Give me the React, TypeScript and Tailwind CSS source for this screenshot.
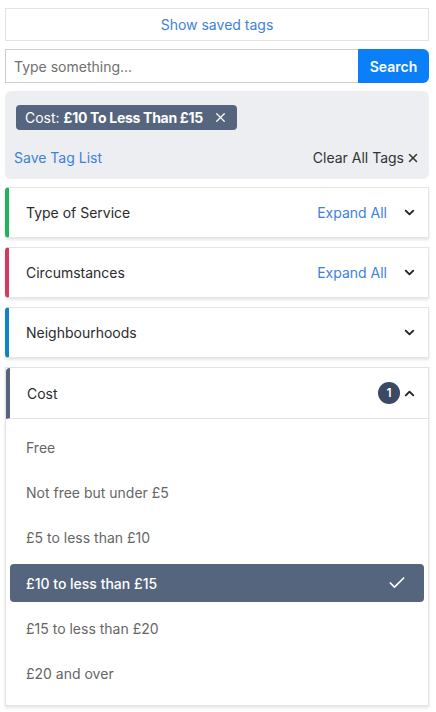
import React from 'react'
import {ChevronDown, ChevronUp, Check, X} from 'lucide-react'

const sections = [
    {title: 'Type of Service', color: 'border-l-[#1fb35f]', expand: true},
    {title: 'Circumstances', color: 'border-l-[#d33a63]', expand: true},
    {title: 'Neighbourhoods', color: 'border-l-[#1282c6]', expand: false},
]

const costs = [
    'Free',
    'Not free but under £5',
    '£5 to less than £10',
    '£10 to less than £15',
    '£15 to less than £20',
    '£20 and over',
]

const App = () => {
    return (
        <div className="w-[436px] h-[712px] bg-white overflow-hidden" style={{fontFamily: 'Inter, "Open Sans", sans-serif'}}>
            <div className="ml-[5px] w-[424px] pt-2">
                <div className="h-[33px] border border-[#e3e3e3] flex items-center justify-center text-[14px] text-[#3d82d9]">
                    Show saved tags
                </div>

                <div className="flex mt-2 h-[34px]">
                    <input type="text"
                           className="flex-1 border border-[#cfcfcf] border-r-0 px-2 text-[14px] text-[#333] placeholder:text-[#707070] outline-none"
                           placeholder="Type something..."
                    />
                    <button className="w-[71px] bg-[#0a7ff7] text-white text-[14px] font-semibold rounded-r-md">
                        Search
                    </button>
                </div>

                <div className="mt-2 bg-[#eceef2] rounded-md px-[9px] pt-[14px] pb-[11px]">
                    <div className="ml-[2px] inline-flex items-center h-[25px] bg-[#56657e] rounded px-[9px] text-white text-[14px]">
                        <span>Cost:&nbsp;</span>
                        <span className="font-bold tracking-[-0.3px]">£10 To Less Than £15</span>
                        <X size={15} strokeWidth={2} className="ml-[10px]" />
                    </div>
                    <div className="flex justify-between items-center mt-[17px] text-[14px]">
                        <span className="text-[#3d82d9]">Save Tag List</span>
                        <span className="flex items-center text-[#333]">
                            Clear All Tags
                            <X size={14} strokeWidth={2.5} className="ml-[2px]" />
                        </span>
                    </div>
                </div>

                <div className="flex flex-col gap-[9px] mt-[8px]">
                    {sections.map(s => (
                        <div key={s.title} className={`h-[51px] bg-white border border-[#e6e6e6] border-l-4 ${s.color} rounded-l-[4px] shadow-[0_2px_3px_rgba(0,0,0,0.1)] flex items-center pl-[17px] pr-[11px]`}>
                            <span className="flex-1 text-[14px] text-[#2b2b2b]">{s.title}</span>
                            {s.expand && <span className="text-[14px] text-[#3d82d9] mr-[15px]">Expand All</span>}
                            <ChevronDown size={15} strokeWidth={3} className="text-[#222]" />
                        </div>
                    ))}

                    <div className="bg-white border border-[#e3e3e3] shadow-[0_2px_3px_rgba(0,0,0,0.1)]">
                        <div className="h-[51px] border-l-4 border-l-[#56657e] rounded-tl-[4px] flex items-center pl-[17px] pr-[11px] border-b border-b-[#e3e3e3]">
                            <span className="flex-1 text-[14px] text-[#2b2b2b]">Cost</span>
                            <span className="w-[22px] h-[22px] rounded-full bg-[#3b4963] text-white text-[12px] font-semibold flex items-center justify-center mr-[2px]">1</span>
                            <ChevronUp size={15} strokeWidth={3} className="text-[#222]" />
                        </div>
                        <div className="pt-[9px] pb-[12px] px-[4px] flex flex-col gap-[7.4px]">
                            {costs.map(c => c === '£10 to less than £15' ? (
                                <div key={c} className="h-[38px] bg-[#56657e] rounded-[4px] flex items-center justify-between pl-[16px] pr-[17px] text-white text-[14px] font-medium">
                                    <span>{c}</span>
                                    <Check size={20} strokeWidth={2} />
                                </div>
                            ) : (
                                <div key={c} className="h-[38px] flex items-center pl-[16px] text-[14px] text-[#666]">
                                    {c}
                                </div>
                            ))}
                        </div>
                    </div>
                </div>
            </div>
        </div>
    )
}

export default App
